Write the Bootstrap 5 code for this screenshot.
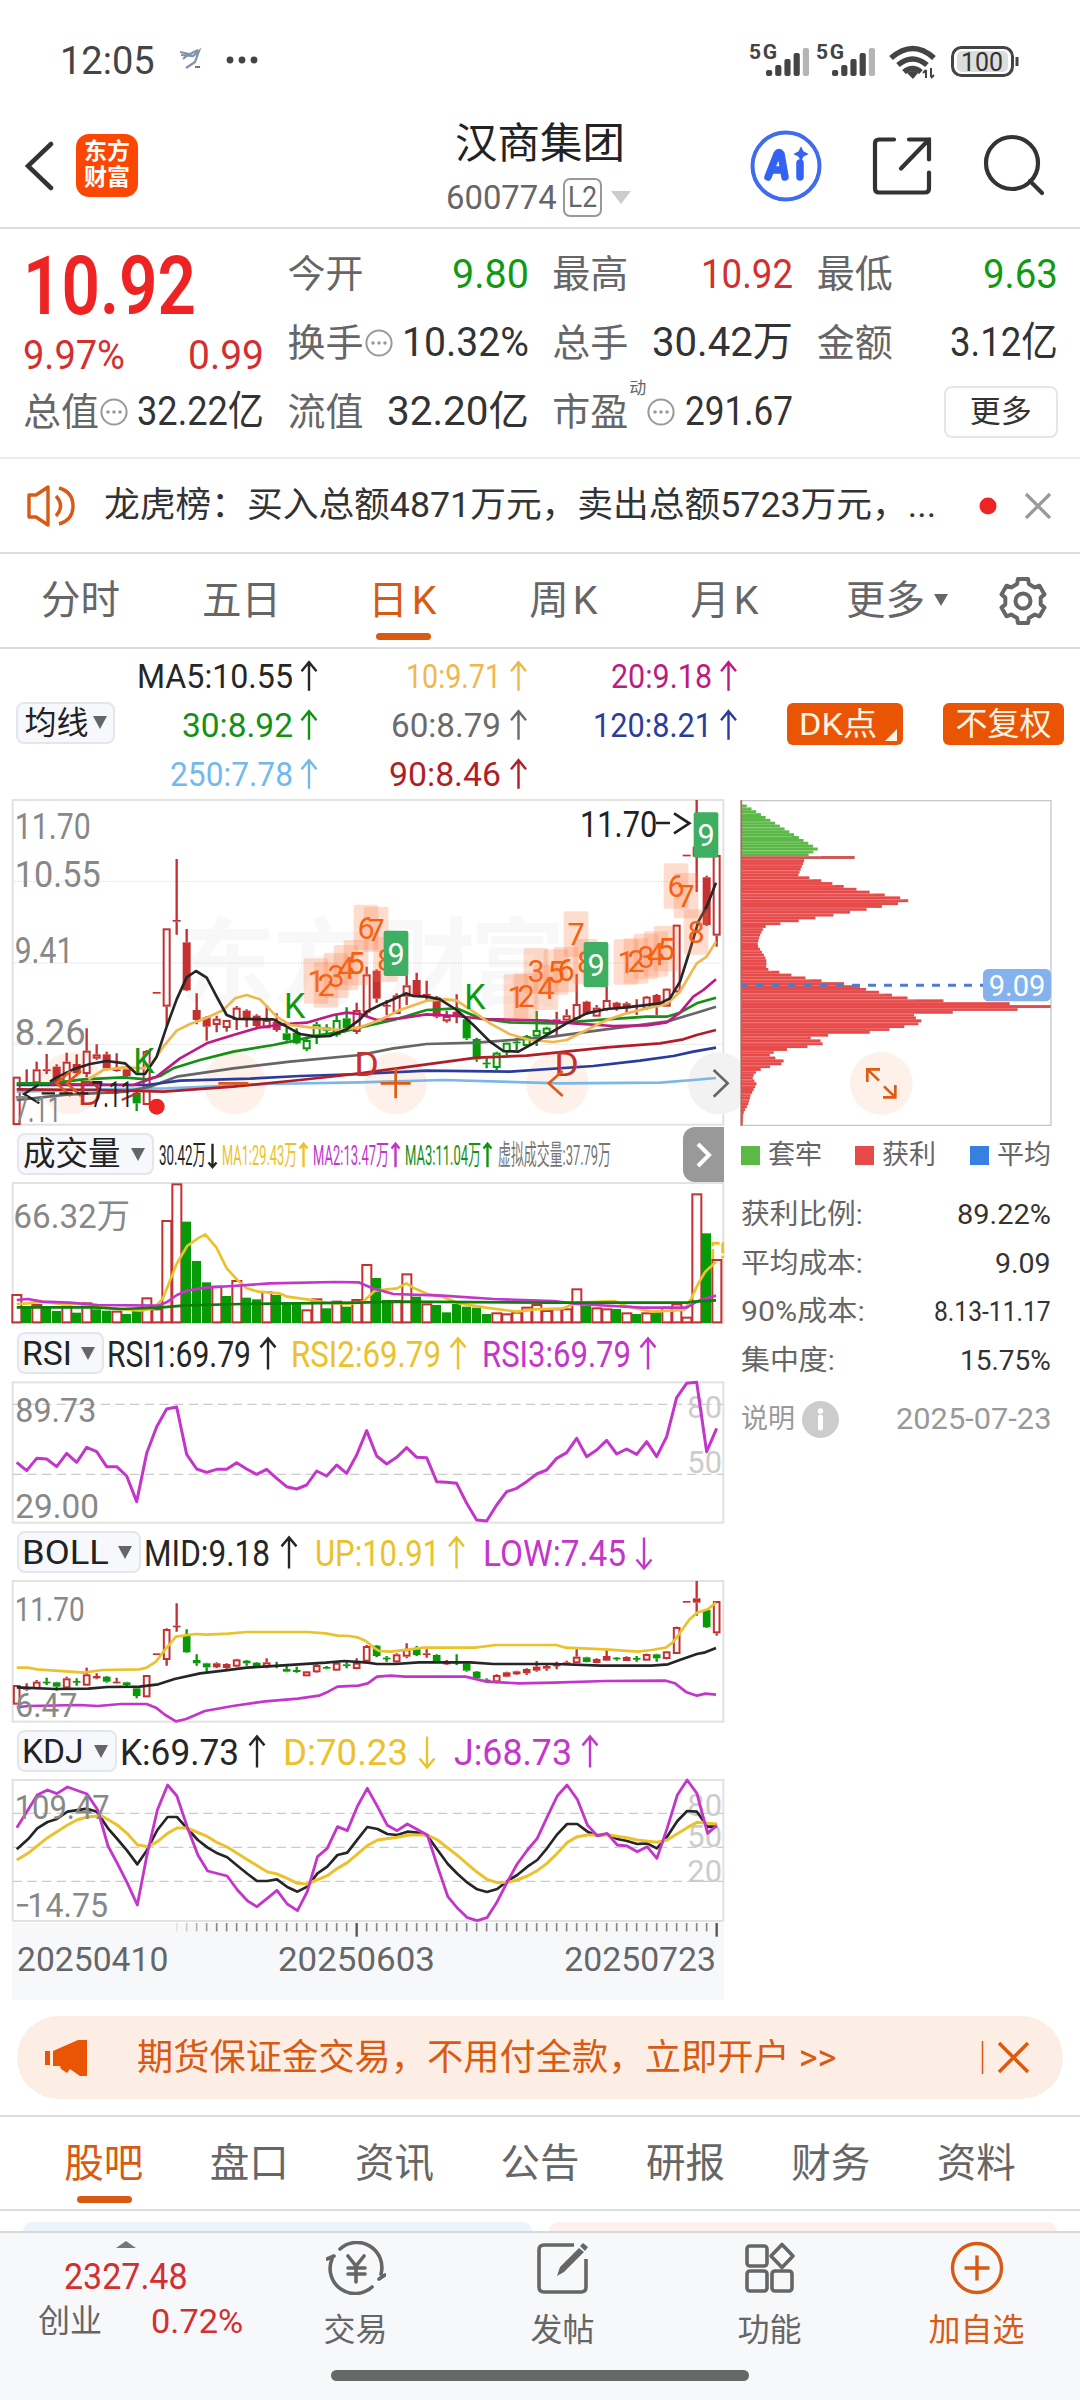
<!DOCTYPE html>
<html lang="zh-CN">
<head>
  <meta charset="UTF-8" />
  <meta name="viewport" content="width=device-width, initial-scale=1.0"/>
  <title>汉商集团 600774</title>
  <link href="https://cdn.jsdelivr.net/npm/bootstrap@5.3.2/dist/css/bootstrap.min.css" rel="stylesheet">
  <style>
    body { width: 1080px; height: 2400px; overflow: hidden; background: #fff; color: #333; line-height: 1;
      font-family: Roboto, "Noto Sans CJK SC", sans-serif; font-size: 38px; }
    svg { display: block; flex: none; }
    svg text { font-family: Roboto, "Noto Sans CJK SC", sans-serif; }
    .fit { display: inline-block; white-space: nowrap; transform-origin: 0 50%; flex: none; }
    .c-red { color: #d32f2f; } .c-green { color: #109a10; } .c-gray { color: #666; } .c-org { color: #d95a12; }
    .line-b { border-bottom: 2px solid #dcdcdc; }
    .status { height: 117px; padding: 0 60px 0 60px; padding-top: 4px; color: #444; }
    .top-bar { height: 112px; padding: 0 34px 0 24px; }
    .logo-tile { width: 62px; height: 63px; border-radius: 13px; background: #fc4704; color: #fff;
      font-size: 23px; font-weight: 700; line-height: 26px; padding-top: 5px; }
    .l2 { width: 39px; height: 39px; border: 2px solid #999; border-radius: 7px; font-size: 30px; }
    .quote { height: 230px; padding: 11px 23px 0; border-bottom: 2px solid #ececec;
      display: grid; grid-template-columns: repeat(4, 241px); column-gap: 23.6px; grid-template-rows: 68px 69px 69px; }
    .price-box { grid-row: span 2; }
    .big { font-size: 81px; font-weight: 600; color: #ee2424; }
    .val { font-size: 41px; }
    .more-btn { width: 114px; height: 52px; border: 2px solid #e6e6e6; border-radius: 8px; font-size: 31px; }
    .news { height: 95px; font-size: 35px; }
    .k-tabs { height: 95px; font-size: 39.5px; color: #666; }
    .k-tabs > div { width: 161px; }
    .bar-mark { position: absolute; bottom: 7px; left: 50%; margin-left: -27px; width: 55px; height: 7px; border-radius: 4px; background: #d95a12; }
    .ma-row { height: 147px; }
    .pill { height: 42px; border: 2px solid #e3e6ec; border-radius: 8px; background: #f7f8fb; color: #222; font-size: 33px; }
    .solid { height: 42px; margin-top: 2px; border-radius: 6px; background: #e95504; color: #fff4e4; font-size: 32px; }
    .left-pane { width: 740px; }
    .right-pane { width: 340px; padding-top: 4px; }
    .ind-head { height: 54px; padding-left: 17px; }
    .next-btn { width: 41px; height: 55px; border-radius: 12px 0 0 12px; background: #999; right: 16px; top: -1px; }
    .sq { width: 19px; height: 19px; }
    .stat { font-size: 28px; height: 48.5px; width: 310px; }
    .ad { margin: 16px 17px; height: 83px; border-radius: 42px; background: #fceee5; color: #d95a12; font-size: 36px; }
    .info-tabs { height: 96px; border-top: 2px solid #dcdcdc; font-size: 39.5px; color: #666; padding: 2px 31px 0; }
    .info-tabs > div { width: 145.5px; }
    .peek { height: 20px; padding: 11px 23px 0; gap: 17px; }
    .peek > div { height: 9px; border-radius: 12px 12px 0 0; }
    .bottom { height: 170px; border-top: 2px solid #d8d9dc; background: #f7f8fa; color: #666; font-size: 32px; }
    .bottom .item { width: 207px; padding-top: 8px; gap: 19px; }
    .home-line { position: absolute; left: 331px; bottom: 20px; width: 418px; height: 11px; border-radius: 6px; background: #666866; }
  </style>
</head>
<body>
  <!-- status bar -->
  <div class="status d-flex align-items-center">
    <span class="fit" data-w="95" style="font-size:38px">12:05</span>
    <svg width="110" height="34" viewBox="171 44 110 34" class="ms-3">
      <path d="M180 52l9 2-6 5M181 55l12 1 6-5-4 11-9 6M190 54l8-4" fill="none" stroke="#7f93ab" stroke-width="2.2"/>
      <path d="M195 67h5" stroke="#777" stroke-width="2"/>
      <g fill="#444"><circle cx="230" cy="60" r="3.4"/><circle cx="242" cy="60" r="3.4"/><circle cx="254" cy="60" r="3.4"/></g>
    </svg>
    <svg width="275" height="44" viewBox="745 38 275 44" class="ms-auto">
      <g fill="#444" font-size="21" font-weight="700">
        <text x="749" y="58" textLength="28">5G</text><text x="816" y="58" textLength="28">5G</text>
      </g>
      <g id="bars"></g>
      <g fill="none" stroke="#444" stroke-width="5.5">
        <path d="M891 57q22-19 43 0M898 64q14.500-12 29 0M904 71q8.500-7 17 0"/>
      </g>
      <path d="M907 72l6 6 5-6q-5-4-11 0z" fill="#444"/>
      <path d="M926 69v8M926 69l-3 3M931 67v9M931 77l3-3" stroke="#444" stroke-width="2" fill="none"/>
      <rect x="952.500" y="46.500" width="60" height="28" rx="9" fill="#fff" stroke="#444" stroke-width="3"/>
      <rect x="957" y="50" width="51" height="21" rx="5" fill="#ddd"/>
      <path d="M1017 56v9" stroke="#444" stroke-width="3"/>
      <text x="961" y="69.500" font-size="25" fill="#333" textLength="42" lengthAdjust="spacingAndGlyphs">100</text>
    </svg>
  </div>

  <!-- title bar -->
  <div class="top-bar line-b d-flex position-relative">
    <svg width="30" height="50" viewBox="0 0 30 50" style="margin-top:24px"><path d="M27 3L4 25l23 22" fill="none" stroke="#333" stroke-width="4.500" stroke-linecap="round"/></svg>
    <div class="logo-tile text-center" style="margin:17px 0 0 22px">东方<br>财富</div>
    <div class="position-absolute start-50 translate-middle-x d-flex flex-column align-items-center" style="top:6px">
      <span style="font-size:42.5px;color:#222">汉商集团</span>
      <div class="d-flex align-items-center c-gray" style="gap:6px;margin-top:12px">
        <span class="fit" data-w="111" style="font-size:34px">600774</span>
        <span class="l2 d-flex align-items-center justify-content-center"><span class="fit" data-w="29">L2</span></span>
        <svg width="26" height="16" viewBox="0 0 26 16"><path d="M3 2h20L13 15z" fill="#ccc"/></svg>
      </div>
    </div>
    <svg width="300" height="72" viewBox="746 130 300 72" class="ms-auto" style="margin-top:13px">
      <circle cx="786" cy="166" r="33.500" fill="none" stroke="#3f6bee" stroke-width="4"/>
      <g stroke="#3363f2" fill="none" stroke-width="7.500" stroke-linecap="round" stroke-linejoin="round">
        <path d="M768 177l9-23q2-3 4 0l4 23M772 170h10M800 163v14"/>
      </g>
      <path d="M801 148l2 4 4 2-4 2-2 4-2-4-4-2 4-2z" fill="#3363f2" stroke="#3363f2" stroke-width="1.500"/>
      <g fill="none" stroke="#333" stroke-width="4.200" stroke-linecap="round">
        <path d="M894 139.500H879q-4 0-4 4v45q0 4 4 4h46q4 0 4-4v-16M909 139.500h20v20M929 139.500l-28 29"/>
        <circle cx="1012" cy="163" r="26"/><path d="M1030 181l12 12"/>
      </g>
    </svg>
  </div>

  <!-- quote figures -->
  <div class="quote">
    <div class="price-box d-flex flex-column">
      <span class="big fit align-self-start" data-w="173" style="margin-top:6px">10.92</span>
      <div class="d-flex justify-content-between c-red val" style="margin-top:8px"><span class="fit" data-w="102">9.97%</span><span class="fit" data-w="76">0.99</span></div>
    </div>
    <div class="cell" data-l="今开" data-v="9.80" data-vw="77" data-c="c-green"></div>
    <div class="cell" data-l="最高" data-v="10.92" data-vw="92" data-c="c-red"></div>
    <div class="cell" data-l="最低" data-v="9.63" data-vw="75" data-c="c-green"></div>
    <div class="cell" data-l="换手" data-v="10.32%" data-vw="127" data-dots="1"></div>
    <div class="cell" data-l="总手" data-v="30.42万" data-vw="141"></div>
    <div class="cell" data-l="金额" data-v="3.12亿" data-vw="108"></div>
    <div class="cell" data-l="总值" data-v="32.22亿" data-vw="127" data-dots="1"></div>
    <div class="cell" data-l="流值" data-v="32.20亿" data-vw="142"></div>
    <div class="cell" data-l="市盈" data-sup="动" data-v="291.67" data-vw="108" data-dots="1"></div>
    <div class="d-flex align-items-center justify-content-end"><div class="more-btn d-flex align-items-center justify-content-center">更多</div></div>
  </div>

  <!-- news line -->
  <div class="news line-b d-flex align-items-center">
    <svg width="80" height="44" viewBox="24 483 80 44" style="margin-left:24px">
      <path d="M29 494h7l12-8v38l-12-8h-7zM56 495q9 10 0 20M59 487q14 4 14 18t-14 18" fill="none" stroke="#d95a12" stroke-width="3.400" stroke-linejoin="round"/>
    </svg>
    <span class="fit" data-w="832">龙虎榜：买入总额4871万元，卖出总额5723万元，...</span>
    <svg width="90" height="40" viewBox="970 485 90 40" style="margin-left:34px">
      <circle cx="988" cy="505" r="8.500" fill="#ee2424"/><path d="M1026 493l24 24M1050 493l-24 24" stroke="#999" stroke-width="3.200"/>
    </svg>
  </div>

  <!-- period tabs -->
  <div class="k-tabs line-b d-flex align-items-center text-center">
    <div>分时</div><div>五日</div>
    <div class="c-org position-relative h-100 d-flex align-items-center justify-content-center">日<span class="ms-1">K</span><i class="bar-mark"></i></div>
    <div>周<span class="ms-1">K</span></div><div>月<span class="ms-1">K</span></div><div>更多</div>
    <svg width="130" height="60" viewBox="930 571 130 60" style="margin-left:-36px">
      <path d="M934 594h14l-7 12z" fill="#666"/>
      <path id="gear" fill="none" stroke="#666" stroke-width="4" stroke-linejoin="round"/>
      <circle cx="1023" cy="601" r="7.500" fill="none" stroke="#666" stroke-width="4"/>
    </svg>
  </div>

  <!-- moving average legend -->
  <div class="ma-row d-flex align-items-center">
    <div class="pill d-flex align-items-center justify-content-center gap-1" style="width:99px;margin-left:16px;font-size:32px">均线<svg width="14" height="13" viewBox="0 0 14 13"><path d="M0 0h14L7 13z" fill="#666"/></svg></div>
    <svg id="maLegend" width="640" height="147" viewBox="115 649 640 147"></svg>
    <div class="solid d-flex align-items-center" style="width:116px;margin-left:32px;padding-left:12px">
      <span class="fit" data-w="78">DK点</span><svg width="12" height="12" viewBox="0 0 12 12" class="align-self-end mb-1 ms-2"><path d="M12 0v12H0z" fill="#fff4e4"/></svg>
    </div>
    <div class="solid d-flex align-items-center justify-content-center" style="width:121px;margin-left:40px">不复权</div>
  </div>

  <div class="d-flex" style="height:1204px">
    <div class="left-pane">
      <svg id="kline" width="740" height="332" viewBox="0 18 2220 996"></svg>
      <div class="ind-head d-flex align-items-center position-relative" style="height:52px">
        <div class="pill d-flex align-items-center justify-content-between" style="width:137px;padding:0 7px 0 4px;font-size:32.5px">成交量<svg width="14" height="13" viewBox="0 0 14 13"><path d="M0 0h14L7 13z" fill="#666"/></svg></div>
        <svg id="volLegend" width="526" height="52" viewBox="154 1128 526 52"></svg>
        <div class="next-btn position-absolute d-flex align-items-center justify-content-center"><svg width="16" height="28" viewBox="0 0 16 28"><path d="M2 3l11 11L2 25" fill="none" stroke="#fff" stroke-width="4"/></svg></div>
      </div>
      <svg id="vol" width="740" height="146" viewBox="0 180 2220 438"></svg>
      <div class="ind-head d-flex align-items-center">
        <div class="pill d-flex align-items-center justify-content-between" style="width:87px;padding:0 7px 0 3px"><span class="fit" data-w="50">RSI</span><svg width="14" height="13" viewBox="0 0 14 13"><path d="M0 0h14L7 13z" fill="#666"/></svg></div>
        <svg id="rsiLegend" width="600" height="54" viewBox="104 1326 600 54"></svg>
      </div>
      <svg id="rsi" width="740" height="145" viewBox="0 780 2220 435"></svg>
      <div class="ind-head d-flex align-items-center">
        <div class="pill d-flex align-items-center justify-content-between" style="width:124px;padding:0 7px 0 3px"><span class="fit" data-w="87">BOLL</span><svg width="14" height="13" viewBox="0 0 14 13"><path d="M0 0h14L7 13z" fill="#666"/></svg></div>
        <svg id="bollLegend" width="580" height="54" viewBox="141 1525 580 54"></svg>
      </div>
      <svg id="boll" width="740" height="145" viewBox="0 177 2220 435"></svg>
      <div class="ind-head d-flex align-items-center">
        <div class="pill d-flex align-items-center justify-content-between" style="width:100px;padding:0 7px 0 3px"><span class="fit" data-w="62">KDJ</span><svg width="14" height="13" viewBox="0 0 14 13"><path d="M0 0h14L7 13z" fill="#666"/></svg></div>
        <svg id="kdjLegend" width="600" height="54" viewBox="117 1724 600 54"></svg>
      </div>
      <svg id="kdj" width="740" height="145" viewBox="0 174 2220 435"></svg>
      <svg id="axis" width="740" height="77" viewBox="0 609 2220 231"></svg>
    </div>

    <div class="right-pane">
      <svg id="chips" width="316" height="328" viewBox="60 60 948 984"></svg>
      <div class="d-flex align-items-center c-gray" style="height:54px;font-size:27px;width:312px;padding-left:1px">
        <i class="sq" style="background:#5bb946;margin-right:8px"></i>套牢
        <i class="sq" style="background:#e84a4a;margin:0 8px 0 33px"></i>获利
        <i class="sq" style="background:#3580e0;margin:0 8px 0 34px"></i>平均
      </div>
      <div style="padding-top:9px;margin-left:1px">
        <div class="stat d-flex align-items-center justify-content-between"><span class="c-gray fit" data-w="122">获利比例:</span><span class="fit" data-w="94">89.22%</span></div>
        <div class="stat d-flex align-items-center justify-content-between"><span class="c-gray fit" data-w="122">平均成本:</span><span class="fit" data-w="56">9.09</span></div>
        <div class="stat d-flex align-items-center justify-content-between"><span class="c-gray fit" data-w="124">90%成本:</span><span class="fit" data-w="117">8.13-11.17</span></div>
        <div class="stat d-flex align-items-center justify-content-between"><span class="c-gray fit" data-w="94">集中度:</span><span class="fit" data-w="91">15.75%</span></div>
        <div class="stat d-flex align-items-center" style="height:68px;color:#999;font-size:27px">说明
          <svg width="37" height="37" viewBox="0 0 37 37" style="margin-left:7px"><circle cx="18.500" cy="18.500" r="18.500" fill="#ccc"/><circle cx="18.500" cy="10" r="2.700" fill="#fff"/><path d="M18.500 16v11" stroke="#fff" stroke-width="5" stroke-linecap="round"/></svg>
          <span class="fit ms-auto" data-w="155" style="font-size:29px">2025-07-23</span>
        </div>
      </div>
    </div>
  </div>

  <!-- promo strip -->
  <div class="ad d-flex align-items-center">
    <svg width="44" height="38" viewBox="44 2039 44 38" style="margin-left:27px"><path d="M45 2051h5v14h-5zM53 2051l25-11h9v36h-7l-10-7-3 4-6-4-1-3h-7z" fill="#e95504"/></svg>
    <span class="fit" data-w="700" style="margin-left:49px">期货保证金交易，不用付全款，立即开户 &gt;&gt;</span>
    <svg width="54" height="40" viewBox="978 2038 54 40" style="margin-left:141px"><path d="M982.500 2041v33" stroke="#d95a12" stroke-width="1.500"/><path d="M999 2043l29 29M1028 2043l-29 29" stroke="#d95a12" stroke-width="3.400"/></svg>
  </div>

  <!-- info tabs -->
  <div class="info-tabs line-b d-flex align-items-center text-center">
    <div class="c-org position-relative h-100 d-flex align-items-center justify-content-center">股吧<i class="bar-mark" style="bottom:6px"></i></div>
    <div>盘口</div><div>资讯</div><div>公告</div><div>研报</div><div>财务</div><div>资料</div>
  </div>
  <div class="peek d-flex">
    <div class="flex-fill" style="background:#edf3fb"></div><div class="flex-fill" style="background:#fdf1f0"></div>
  </div>

  <!-- bottom bar -->
  <div class="bottom d-flex position-relative">
    <div style="width:252px">
      <svg width="20" height="7" viewBox="0 0 20 7" style="margin:8px 0 0 116px"><path d="M10 0l10 7H0z" fill="#777"/></svg>
      <div class="c-red" style="margin:10px 0 0 64px;font-size:37px"><span class="fit" data-w="124">2327.48</span></div>
      <div class="d-flex align-items-center" style="margin:9px 0 0 38px">创业<span class="fit c-red" data-w="92" style="font-size:34px;margin-left:49px">0.72%</span></div>
    </div>
    <div class="item d-flex flex-column align-items-center">
      <svg width="60" height="54" viewBox="0 0 60 54"><g fill="none" stroke="#666" stroke-width="3.600" stroke-linecap="round"><path d="M14 8A25 25 0 0 1 55 33M46 46A25 25 0 0 1 6 18M1 18l7-3M59 34l-6 4M22 15l8 10 8-10M22 27h17M22 33h17M30 25v16"/></g></svg>
      <span>交易</span></div>
    <div class="item d-flex flex-column align-items-center">
      <svg width="54" height="54" viewBox="0 0 54 54"><path d="M38 4H8q-5 0-5 5v37q0 5 5 5h37q5 0 5-5V18" fill="none" stroke="#666" stroke-width="3.600"/><path d="M21 35l3-9L43 7l5 4-20 20z" fill="#666"/><path d="M44 5l3-3 5 4-3 4z" fill="#666"/></svg>
      <span>发帖</span></div>
    <div class="item d-flex flex-column align-items-center">
      <svg width="54" height="54" viewBox="0 0 54 54"><g fill="none" stroke="#666" stroke-width="3.600" stroke-linejoin="round"><rect x="4" y="5" width="20" height="20" rx="3"/><rect x="4" y="30" width="20" height="20" rx="3"/><rect x="29" y="30" width="20" height="20" rx="3"/><path d="M39 3.500l11 11.500-11 11.500L28 15z"/></g></svg>
      <span>功能</span></div>
    <div class="item d-flex flex-column align-items-center c-org">
      <svg width="54" height="54" viewBox="0 0 54 54"><g fill="none" stroke="#d95a12" stroke-width="3.400"><circle cx="27" cy="27" r="24.500"/><path d="M27 14.500v25M14.500 27h25"/></g></svg>
      <span>加自选</span></div>
    <i class="home-line"></i>
  </div>

  <script src="https://cdn.jsdelivr.net/npm/bootstrap@5.3.2/dist/js/bootstrap.bundle.min.js"></script>
  <script>
    const $ = id => document.getElementById(id);
    const add = (id, html) => { $(id).innerHTML += html; };

    // quote cells
    document.querySelectorAll(".cell").forEach(c => {
      const d = c.dataset;
      c.className = "cell d-flex align-items-center position-relative";
      c.innerHTML = `<span class="c-gray">${d.l}</span>` +
        (d.sup ? `<span class="c-gray align-self-start" style="font-size:17px;margin:3px 0 0 1px">${d.sup}</span>` : "") +
        (d.dots ? `<svg width="28" height="28" viewBox="0 0 28 28" style="margin-left:1px"><circle cx="14" cy="14" r="12.600" fill="none" stroke="#999" stroke-width="2"/><g fill="#999"><circle cx="8" cy="14" r="1.800"/><circle cx="14" cy="14" r="1.800"/><circle cx="20" cy="14" r="1.800"/></g></svg>` : "") +
        `<span class="fit val ms-auto ${d.c || ""}" data-w="${d.vw}">${d.v}</span>`;
    });

    // squeeze a text into its slot
    function fitAll() {
      document.querySelectorAll(".fit").forEach(el => {
        const w = +el.dataset.w, n = el.offsetWidth;
        el.style.width = w + "px";
        el.style.transform = `scaleX(${w / n})`;
      });
    }
    // scaled glyphs must start from their natural width
    document.fonts.ready.then(fitAll);

    // signal bars
    let bars = "";
    [766, 832].forEach(x0 => [6, 11, 17, 23, 28].forEach((h, i) => {
      bars += `<rect x="${x0 + i * 9.2}" y="${75 - h}" width="6.200" height="${h}" rx="2" fill="${i === 4 ? "#b5b5b5" : "#444"}"/>`;
    }));
    add("bars", bars);

    // gear outline
    let g = "";
    for (let i = 0; i < 6; i++) {
      [[-13, 22.5], [13, 22.5], [19, 18], [41, 18]].forEach(([a, r], j) => {
        const t = (i * 60 + a - 90) * Math.PI / 180;
        g += `${i + j ? "L" : "M"}${(1023 + r * Math.cos(t)).toFixed(1)} ${(601 + r * Math.sin(t)).toFixed(1)}`;
      });
    }
    $("gear").setAttribute("d", g + "z");

    const txt = (t, x0, x1, y, size, color, extra = "") =>
      `<text x="${x0}" y="${y}" font-size="${size}" fill="${color}" textLength="${x1 - x0}" lengthAdjust="spacingAndGlyphs" ${extra}>${t}</text>`;
    function arrow(x, top, bot, down, color, w) {
      const tip = down ? bot : top, k = down ? -1 : 1;
      return `<path d="M${x} ${top}V${bot}M${x - w} ${tip + k * w * 1.2}L${x} ${tip}l${w} ${k * w * 1.2}" fill="none" stroke="${color}" stroke-width="2.400"/>`;
    }
    // [text, x0, x1, arrow x, colour, baseline, down]
    function legend(id, size, rows) {
      const w = size > 30 ? 7.5 : 4;
      rows.forEach(([t, x0, x1, ax, c, y, down]) => {
        add(id, txt(t, x0 - 1, x1 + 1, y, size, c) + (ax ? arrow(ax, y - size * 0.76, y + size * 0.08, down, c, w) : ""));
      });
    }
    const Y = "#ebc22c", P = "#c435cb", B = "#262626";
    legend("maLegend", 34, [
      ["MA5:10.55", 138, 292, 309, B, 688], ["10:9.71", 407, 500, 518.5, "#efb84e", 688], ["20:9.18", 612, 711, 728.5, "#bd1b83", 688],
      ["30:8.92", 183, 292, 309, "#149014", 737], ["60:8.79", 392, 500, 518.5, "#6b6b6b", 737], ["120:8.21", 594, 711, 728.5, "#2a3d9e", 737],
      ["250:7.78", 171, 292, 309, "#74b9ea", 786], ["90:8.46", 390, 500, 518.5, "#b01f29", 786]
    ]);
    legend("volLegend", 28, [
      ["30.42万", 160, 205, 212.5, B, 1165, 1], ["MA1:29.43万", 223, 296, 303.5, Y, 1165], ["MA2:13.47万", 314, 388, 395.5, P, 1165],
      ["MA3:11.04万", 406, 480, 487.5, "#149014", 1165], ["虚拟成交量:37.79万", 499, 610, 0, "#777", 1165]
    ]);
    legend("rsiLegend", 37, [["RSI1:69.79", 108, 250, 268, B, 1366.5], ["RSI2:69.79", 292, 440, 458, Y, 1366.5], ["RSI3:69.79", 483, 630, 648, P, 1366.5]]);
    legend("bollLegend", 37, [["MID:9.18", 145, 269, 289, B, 1565.5], ["UP:10.91", 316, 439, 456.5, Y, 1565.5], ["LOW:7.45", 484, 625, 644, P, 1565.5, 1]]);
    legend("kdjLegend", 37, [["K:69.73", 121, 238, 257, B, 1764.5], ["D:70.23", 284, 407, 427, Y, 1764.5, 1], ["J:68.73", 455, 571, 590, P, 1764.5]]);

    // chart units are thirds of a pixel; one bar every 30 units
    const X = i => 50 + 30 * i, KX = 1.3966;
    const RED = "#c53030", GRN = "#069a06";
    const frame = (y0, y1) => `<rect x="38" y="${y0}" width="2132" height="${y1 - y0}" fill="none" stroke="#e2e2e2" stroke-width="6"/>`;
    function poly(str, color, kx = 1, w = 8) {
      const p = str.trim().split(/\s+/).map(s => { const [x, y] = s.split(","); return (x * kx).toFixed(1) + "," + y; });
      return `<polyline points="${p.join(" ")}" fill="none" stroke="${color}" stroke-width="${w}" stroke-linejoin="round"/>`;
    }
    // "high,top,bottom,low,type": r/g hollow, R/G solid
    function candles(str, bw) {
      let s = "";
      str.trim().split(/\s+/).forEach((c, i) => {
        const a = c.split(","), t = a[4], [hi, top, bot, lo] = a.map(Number), x = X(i);
        const col = t.toLowerCase() === "r" ? RED : GRN;
        s += `<path d="M${x} ${hi}V${top}M${x} ${bot}V${lo}" stroke="${col}" stroke-width="7"/>`;
        const h = Math.max(bot - top, 5);
        s += t === t.toUpperCase() || h < 8
          ? `<rect x="${x - bw / 2}" y="${top}" width="${bw}" height="${h}" fill="${col}"/>`
          : `<rect x="${x - bw / 2 + 3}" y="${top + 3}" width="${bw - 6}" height="${h - 6}" fill="#fff" stroke="${col}" stroke-width="6"/>`;
      });
      return s;
    }

    // ---- daily candles ----
    let k = `<g fill="#f8f8f8" font-weight="700" font-size="285"><text x="540" y="625">东</text><text x="820" y="625">方</text><text x="1140" y="625">财</text><text x="1410" y="625">富</text></g>`;
    [274, 519, 763].forEach(y => { k += `<path d="M38 ${y}H2170" stroke="#ccc" stroke-width="3" stroke-dasharray="3 5"/>`; });
    k += frame(30, 1004);
    [[213, "#fef1ea"], [704, "#fef1ea"], [1187, "#fef1ea"], [1672, "#fef1ea"], [2157, "#f2f2f2"]].forEach(([x, c]) => { k += `<circle cx="${x}" cy="880" r="93" fill="${c}"/>`; });
    k += candles(`860,860,1005,1005,r 838,880,888,888,R 815,838,880,880,r 792,838,842,852,R 823,830,880,880,R 788,815,880,880,r 793,822,850,850,R
      715,782,852,862,r 763,793,806,810,r 785,793,835,835,R 790,838,841,845,R 835,838,858,862,R 905,908,940,963,G 780,783,945,945,r 606,606,611,611,R
      415,415,650,708,r 207,390,395,434,R 417,457,601,603,R 610,660,690,703,R 678,682,710,752,R 677,686,705,727,r 690,690,714,725,r 648,653,690,720,r
      658,662,690,712,R 673,677,708,715,R 645,690,715,715,r 670,695,720,725,R 712,730,750,752,G 715,728,760,763,G 740,750,778,783,g 695,703,740,762,g
      703,712,722,738,G 675,690,735,740,g 652,685,715,720,G 638,660,726,732,r
      530,553,668,680,r 538,542,626,638,R 630,645,649,675,R 610,616,672,672,r 545,586,620,645,r 548,570,615,620,R 572,612,616,632,R 618,622,680,685,R
      662,678,694,698,r 613,665,680,700,R 685,688,745,750,G 743,747,808,815,G 805,818,823,835,G 785,788,834,840,g 758,758,787,795,g 743,755,760,780,G
      735,738,768,770,g 663,720,740,768,g 710,713,732,738,g 665,688,693,735,R 658,676,692,695,r 552,642,687,690,r 632,635,672,675,R 645,653,680,680,r
      590,630,660,662,r 635,638,652,662,R 635,640,655,668,R 628,645,649,675,R 618,620,657,660,r 612,615,645,675,R 595,596,650,650,r 404,404,607,608,r
      194,194,199,199,R 30,170,200,306,R 257,262,405,408,R 195,195,437,470,r`, 24);
    k += poly("50,905 300,898 500,895 800,882 1080,877 1330,870 1680,880 1980,878 2080,870 2148,864", "#7ab8e8");
    k += poly("50,930 200,914 380,905 450,890 530,860 700,835 870,815 1080,795 1180,775 1280,762 1430,758 1640,742 1840,715 2000,695 2090,668 2148,650", "#666");
    k += poly("50,885 440,885 540,872 750,866 900,858 1080,852 1280,842 1530,845 1780,828 1920,812 2020,798 2080,785 2148,773", "#2a3d9e");
    k += poly("50,898 300,900 490,905 700,890 900,870 1080,850 1230,830 1430,803 1580,797 1820,772 1980,760 2050,748 2090,735 2148,720", "#b01f29");
    k += poly("50,880 150,880 250,868 370,862 440,868 480,858 520,835 600,810 700,785 820,765 870,755 960,735 1030,725 1080,712 1180,690 1280,660 1370,655 1440,685 1530,697 1660,700 1820,688 1940,680 2000,680 2040,668 2090,640 2148,623", "#149014");
    k += poly("150,882 400,885 470,860 540,805 620,760 700,735 780,712 860,702 920,698 1000,675 1040,668 1080,672 1130,690 1200,685 1280,673 1370,678 1450,687 1640,692 1720,700 1840,708 1940,706 2000,697 2040,668 2080,620 2110,600 2148,568", "#bd1b83");
    k += poly("265,868 310,840 370,832 430,835 455,822 490,770 530,722 570,702 610,688 670,660 705,625 740,615 780,628 830,680 870,705 930,712 1020,720 1080,712 1140,690 1200,660 1280,632 1340,628 1370,632 1420,665 1470,700 1530,733 1590,750 1660,756 1700,750 1760,720 1820,690 1880,670 1940,655 2000,642 2040,605 2090,520 2120,500 2148,455", "#efb84e");
    k += poly("150,875 170,862 220,838 270,822 320,813 375,820 410,852 435,852 470,800 500,710 530,628 560,562 588,543 620,563 650,620 680,675 710,687 820,688 860,710 900,732 950,740 990,738 1040,718 1080,688 1100,665 1140,645 1180,628 1218,610 1240,618 1280,620 1320,628 1370,660 1420,705 1470,755 1510,783 1555,785 1600,760 1640,735 1700,700 1760,670 1820,657 1880,652 1980,640 2010,625 2040,575 2070,480 2095,395 2120,350 2148,278", B);
    // nine-turn tags
    [[911,505,1],[941,517,2],[971,488,3],[1001,465,4],[1031,450,5],[1061,344,6],[1091,350,7],[1120,440,8],[1151,422,9],
     [1511,553,1],[1541,550,2],[1571,475,3],[1601,524,4],[1631,478,5],[1661,471,6],[1691,364,7],[1720,447,8],[1751,456,9],
     [1841,448,1],[1871,445,2],[1901,431,3],[1931,424,4],[1961,408,5],[1991,220,6],[2021,249,7],[2051,358,8],[2081,67,9]
    ].forEach(([x, y, n]) => {
      k += `<rect x="${x}" y="${y}" width="74" height="136" rx="6" fill="${n === 9 ? "#3eae62" : "#fb7a45"}" ${n === 9 ? "" : 'fill-opacity=".26"'}/>
        <text x="${x + 37}" y="${y + 102}" font-size="92" text-anchor="middle" fill="${n === 9 ? "#fff" : "#f4600c"}">${n}</text>`;
    });
    k += txt("K", 852, 916, 683, 106, "#109a10") + txt("K", 400, 464, 850, 106, "#109a10") + txt("K", 1393, 1457, 656, 106, "#109a10");
    [[242, 872], [1072, 785], [1672, 787]].forEach(([x, y]) => { k += txt("D", x - 9, x + 65, y + 72, 102, "#c5302e"); });
    k += `<path d="M212 843l-42 37 42 38M243 843l-42 37 42 38M1688 843l-42 37 42 38M655 880h90M1142 880h90M1187 835v90" fill="none" stroke="#e05a12" stroke-width="8"/>
      <path d="M2141 840l42 40-42 40" fill="none" stroke="#666" stroke-width="8"/>
      <path d="M115 885L72 912l46 28M125 910h40M178 910h40M230 910h35" fill="none" stroke="#222" stroke-width="7"/>
      <path d="M315 908h40M365 930l50-22" stroke="#c53030" stroke-width="7"/>
      <circle cx="470" cy="950" r="24" fill="#ee2424"/>`;
    [["11.70", 272, 147], ["10.55", 302, 291], ["9.41", 220, 519], ["8.26", 257, 766], ["7.11", 184, 996]].forEach(([t, x, y]) => { k += txt(t, 44, x, y, 112, "#888"); });
    k += txt("7.11", 274, 398, 950, 108, "#222") + txt("11.70", 1740, 1972, 141, 110, "#222")
      + `<path d="M1976 99h42M2030 70l46 30-46 30" transform="translate(-20 0)" fill="none" stroke="#222" stroke-width="8"/>`.replace("translate(-20 0)", "translate(-8 0)");
    add("kline", k);

    // ---- volume ----
    let v = frame(189, 609);
    `522r 560G 552r 560G 573G 557r 578G 547r 568G 572G 572r 582G 573G 532r 565r 300r 190r 305G 423G 487G 497r 528G 480r 533G 538G 513r 525G 547G 547G 568r 535r 565G 542r 560G 537r 432r 474G 540G 540r 460r 530G 550r 555G 577G 552G 560G 563G 582G 577r 580r 575r 560r 552r 570r 565r 565r 505r 557G 562r 565r 567G 577r 582G 577r 577G 560r 550r 590r 220r 340G 417r`
      .split(" ").forEach((s, i) => {
        const y = parseInt(s), x = X(i) - 15;
        v += s.endsWith("G") ? `<rect x="${x + 1}" y="${y}" width="27" height="${609 - y}" fill="${GRN}"/>`
          : `<rect x="${x + 2}" y="${y + 3}" width="27" height="${Math.max(604 - y, 6)}" fill="#fff" stroke="${RED}" stroke-width="6"/>`;
      });
    v += `<path d="M2138 417V370h30v45" fill="none" stroke="${Y}" stroke-width="9" stroke-dasharray="30 8"/>`;
    v += poly("36,552 60,550 90,545 130,552 170,552 210,560 250,566 300,572 330,565 350,535 380,430 402,378 425,355 441,343 465,383 487,445 510,480 530,505 555,515 600,520 617,530 660,538 700,548 750,552 780,545 805,512 853,505 873,490 890,505 918,522 950,530 985,550 1040,562 1110,575 1150,568 1210,565 1240,548 1320,543 1350,560 1400,575 1470,570 1485,535 1500,490 1515,455 1538,425", Y, KX);
    v += poly("36,540 60,537 90,545 150,548 210,555 340,557 360,545 380,525 402,512 440,503 500,498 580,490 720,486 770,487 800,505 845,522 950,527 1060,537 1190,543 1240,552 1380,563 1475,563 1490,550 1510,537 1538,527", P, KX);
    v += poly("36,562 200,562 260,567 340,563 400,556 520,552 770,548 850,545 1180,548 1475,548 1490,545 1538,541", "#0a800a", KX);
    v += txt("66.32万", 40, 390, 323, 102, "#888");
    add("vol", v);

    const guide = ys => ys.map(y => `<path d="M38 ${y}H2170" stroke="#ccc" stroke-width="4" stroke-dasharray="28 16"/>`).join("");

    // ---- RSI ----
    const rsi = [1027,1052,1015,1017,1040,1000,1027,982,995,1040,1040,1068,1145,1000,920,867,861,1003,1047,1057,1048,1048,1028,1047,1063,1048,1075,1100,1107,1095,1053,1068,1035,1060,1005,932,1008,1032,1012,983,1012,1013,1085,1087,1090,1150,1200,1203,1155,1115,1105,1085,1062,1050,1015,998,955,1010,990,961,1002,987,1003,965,1010,950,833,790,787,995,925];
    add("rsi", frame(787, 1208) + guide([853, 1063]) + txt("80", 2062, 2166, 895, 96, "#ccc") + txt("50", 2062, 2166, 1060, 96, "#ccc")
      + poly(rsi.map((y, i) => X(i) + "," + y).join(" "), P, 1, 9)
      + txt("89.73", 46, 289, 905, 102, "#888") + txt("29.00", 46, 297, 1195, 102, "#888"));

    // ---- BOLL ----
    add("boll", frame(183, 605) + candles(`495,495,554,554,r 490,502,509,512,R 480,485,507,508,r 473,485,489,495,G 485,487,500,512,G 470,475,505,505,r 475,483,487,497,G
      443,463,497,497,r 460,468,475,478,R 468,470,485,488,G 473,485,489,490,R 485,487,495,498,G 500,505,528,535,G 465,465,532,532,r 400,400,405,405,R
      325,327,420,437,r 250,317,321,335,R 328,345,397,398,G 403,420,430,437,G 428,430,442,455,G 427,430,442,445,R 430,432,444,446,R 416,418,440,442,r
      420,422,430,437,G 426,428,438,440,G 415,427,442,445,r 425,435,439,445,G 438,447,455,457,G 440,450,456,458,G 453,454,469,469,r 433,435,457,458,r
      438,441,446,448,G 425,428,452,453,r 420,433,437,445,G 415,428,447,448,r 375,378,425,426,r 375,377,408,412,G 408,413,417,425,G 400,403,427,428,r
      370,388,410,415,r 378,385,405,408,G 388,400,404,413,R 403,405,427,428,G 420,425,433,435,R 403,425,429,435,G 428,430,452,455,G 453,455,475,480,G
      475,479,482,485,G 463,465,487,490,r 455,457,470,472,R 452,454,463,465,R 445,447,460,465,R 423,440,452,455,R 435,438,446,452,R 425,434,438,448,R
      422,427,433,435,R 383,410,430,430,r 410,412,426,427,G 415,417,429,430,R 390,408,422,423,R 411,413,418,422,G 409,411,423,423,R 408,414,418,425,G
      401,402,422,422,r 401,403,415,425,G 393,394,417,418,r 320,321,402,402,r 243,243,248,248,R 183,235,248,287,R 268,270,322,324,G 243,243,340,347,r`, 23)
      + poly("36,443 60,443 80,448 180,458 220,450 300,448 315,443 335,425 355,388 378,350 420,342 445,344 490,341 530,336 660,336 700,340 725,347 750,348 770,353 785,362 805,385 815,393 840,395 880,388 910,383 1020,383 1065,375 1195,375 1215,383 1300,388 1370,395 1400,390 1430,383 1445,368 1460,340 1480,300 1497,278 1520,268 1538,248", Y, KX)
      + poly("36,502 120,507 190,506 230,501 300,500 340,493 375,477 430,460 480,452 530,443 600,437 700,428 740,423 790,428 810,432 850,432 900,427 1010,427 1060,432 1195,432 1290,437 1400,437 1435,433 1460,420 1497,402 1515,397 1538,384", B, KX)
      + poly("36,562 60,558 170,555 210,558 260,552 315,552 335,563 355,585 378,604 400,597 440,573 500,558 570,544 640,536 685,527 705,515 725,500 770,497 790,490 810,470 840,467 870,470 1000,470 1045,485 1115,490 1190,488 1300,483 1430,482 1450,490 1475,517 1497,527 1515,521 1538,524", P, KX)
      + txt("11.70", 44, 254, 302, 102, "#888") + txt("6.47", 46, 232, 592, 102, "#888"));

    // ---- KDJ ----
    add("kdj", frame(180, 603) + guide([280, 382, 484])
      + [["80", 288], ["50", 382], ["20", 485]].map(([t, y]) => txt(t, 2062, 2166, y, 92, "#ccc")).join("")
      + poly("36,388 60,358 80,325 102,306 122,297 145,275 187,266 208,275 232,325 252,357 273,392 295,433 315,392 338,330 360,291 380,291 402,325 425,360 446,383 467,400 488,412 510,437 532,462 552,483 574,483 595,478 617,501 639,515 660,500 682,460 703,440 725,405 746,398 768,358 789,321 811,327 832,342 853,345 875,335 897,338 918,347 940,390 962,432 983,462 1004,488 1025,508 1046,516 1068,507 1090,483 1111,465 1133,440 1154,420 1175,385 1197,343 1218,312 1240,312 1262,335 1283,347 1304,343 1326,357 1347,363 1369,372 1390,370 1411,385 1433,350 1455,303 1476,273 1497,275 1520,320 1540,320", B, KX)
      + poly("36,420 60,400 102,353 145,315 165,300 187,291 218,287 252,315 273,340 295,374 318,380 338,365 360,340 380,324 402,324 446,350 467,368 488,381 530,418 574,455 595,462 617,475 639,490 660,492 703,467 725,445 746,428 789,377 811,360 853,352 880,345 918,345 940,360 983,407 1025,457 1046,478 1068,488 1090,487 1111,480 1133,468 1154,452 1175,430 1197,400 1218,368 1240,350 1262,345 1304,344 1347,353 1369,360 1411,367 1433,360 1476,323 1497,307 1540,312", Y, KX, 9)
      + poly("36,323 60,270 80,225 102,210 122,221 145,201 187,222 210,270 232,378 252,430 273,488 295,555 315,410 338,270 360,195 380,228 402,320 425,405 446,453 488,468 510,510 532,543 552,560 574,535 595,511 617,552 639,572 660,515 682,410 703,385 725,320 746,332 768,258 789,205 811,260 832,316 853,332 875,312 918,345 940,440 962,530 983,565 1004,593 1025,602 1046,593 1068,545 1090,485 1111,432 1133,390 1154,355 1175,292 1197,228 1218,195 1240,238 1262,316 1283,347 1304,340 1326,375 1347,378 1369,395 1390,380 1411,415 1433,325 1455,225 1476,180 1497,220 1520,340 1540,316", P, KX, 8.5)
      + txt("109.47", 44, 329, 298, 102, "#888") + txt("14.75", 82, 324, 590, 102, "#888") + txt("−", 44, 90, 590, 100, "#888"));

    // ---- date axis ----
    let ax = `<rect x="36" y="609" width="2136" height="231" fill="#f7f8fa"/>`;
    for (let i = 16; i <= 70; i++) {
      const big = i === 34 || i === 70;
      ax += `<path d="M${X(i)} 609V${big ? 650 : 634}" stroke="${big ? "#555" : "#888"}" stroke-width="${big ? 7 : 5}" opacity="${Math.min(1, (i - 15) / 5)}"/>`;
    }
    ax += txt("20250410", 51, 505, 752, 99, "#666") + txt("20250603", 834, 1305, 752, 99, "#666") + txt("20250723", 1693, 2148, 752, 99, "#666");
    add("axis", ax);

    // ---- chip distribution ----
    const env = "238,254 285,235 292,262 300,296 309,331 318,366 326,402 334,437 343,484 352,534 360,571 369,543 377,497 386,450 395,398 404,346 412,295 421,243 429,192 437,140 445,130 470,118 495,112 505,118 530,135 545,140 560,138 568,145 573,165 581,195 590,237 598,279 607,333 615,415 624,424 632,453 641,500 650,534 658,595 667,752 675,992 684,992 693,772 702,590 710,571 718,606 727,602 736,587 744,510 753,506 762,368 770,262 778,283 787,321 795,295 804,231 812,173 820,153 829,147 837,178 846,199 855,173 863,134 871,116 880,103 895,98 912,110 925,103 945,92 960,88 975,84 985,77 1000,70 1036,68"
      .split(" ").map(s => s.split(",").map(Number));
    function width(y) {
      let n = 1;
      while (n < env.length - 1 && env[n][0] < y) n++;
      const [y0, x0] = env[n - 1], [y1, x1] = env[n];
      return x0 + (x1 - x0) * Math.max(0, Math.min(1, (y - y0) / (y1 - y0)));
    }
    let c = `<rect x="63" y="62" width="930" height="974" fill="#fff" stroke="#c8c8c8" stroke-width="4"/>`;
    for (let i = 0; i < 19; i++) {
      const y = 65 + i * 8.6, x = i < 17 ? 66 + i * 14.2 : 294 - (i - 16) * 14;
      c += `<rect x="63" y="${y}" width="${x - 63}" height="8.900" fill="#5bb946"/>`;
    }
    c += `<rect x="63" y="228" width="341" height="9" fill="#c95a55"/>`;
    for (let y = 237.6; y < 1034; y += 8.58) {
      c += `<rect x="63" y="${y}" width="${width(y + 4.3) - 63}" height="8.900" fill="#e84a4a"/>`;
    }
    for (let i = 0; i < 110; i++) {
      const y = 70 + i * 8.6;
      if (i % 5 === 1 || i % 5 === 3) c += `<path d="M66 ${y + 5}H${y < 228 ? 66 + (y - 65) * 1.5 : width(y + 3) - 3}" stroke="#fff" stroke-opacity=".3" stroke-width="2"/>`;
    }
    c += `<path d="M64 61V1037" stroke="#b06a60" stroke-width="5"/>
      <path d="M63 616H790" stroke="#4a80c8" stroke-width="9" stroke-dasharray="24 24" stroke-dashoffset="3"/>
      <rect x="789" y="567" width="204" height="97" rx="16" fill="#85b2ec"/>` + txt("9.09", 806, 976, 648, 88, "#fff")
      + `<circle cx="484" cy="910" r="94" fill="#fef1ea"/>
      <path d="M442 906V868h38M443 869l34 33M526 915v37h-37M525 951l-33-32" fill="none" stroke="#e05a12" stroke-width="8"/>`;
    add("chips", c);
  </script>
</body>
</html>
